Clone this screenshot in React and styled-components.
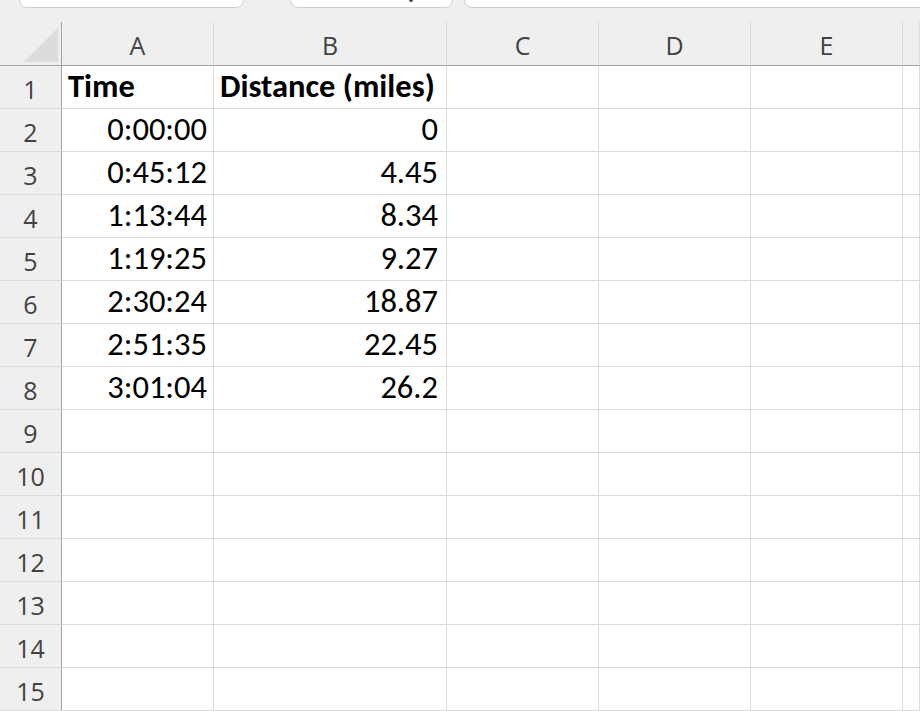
import styled, { createGlobalStyle } from "styled-components";

const GlobalStyle = createGlobalStyle`
  html, body {
    margin: 0;
    padding: 0;
    background: #efefef;
    overflow: hidden;
  }
`;

const COLS = ["A", "B", "C", "D", "E", ""];
const WIDTHS = "62px 152px 233px 152px 152px 152px 1fr";

const rows = [
  ["Time", "Distance (miles)"],
  ["0:00:00", "0"],
  ["0:45:12", "4.45"],
  ["1:13:44", "8.34"],
  ["1:19:25", "9.27"],
  ["2:30:24", "18.87"],
  ["2:51:35", "22.45"],
  ["3:01:04", "26.2"],
];

const Page = styled.div`
  width: 920px;
  height: 711px;
  overflow: hidden;
  background: #efefef;
  display: flex;
  flex-direction: column;
`;

const TabStrip = styled.div`
  height: 22px;
  display: flex;
  align-items: flex-start;
  padding-left: 19px;
  flex-shrink: 0;
`;

const Tab = styled.div`
  box-sizing: border-box;
  height: 15px;
  margin-top: -7px;
  width: ${(p) => p.$w};
  margin-right: ${(p) => p.$gap || "0px"};
  flex-shrink: 0;
  background: #ffffff;
  border: 1px solid #cfcfcf;
  border-radius: 0 0 8px 8px;
  position: relative;
`;

const Descender = styled.span`
  position: absolute;
  left: 118px;
  top: 6px;
  width: 4px;
  height: 2px;
  border-radius: 0 0 3px 3px;
  background: #444;
`;

const Grid = styled.div`
  display: grid;
  grid-template-columns: ${WIDTHS};
  grid-auto-rows: 43px;
  grid-template-rows: 44px;
  background: #ffffff;
  flex: 1;
`;

const ColHead = styled.div`
  background: #efefef;
  border-bottom: 1px solid #a4a4a4;
  border-right: 1px solid #dadada;
  display: flex;
  align-items: center;
  justify-content: center;
  padding-top: 3px;
  box-sizing: border-box;
  font-family: "Open Sans", "Noto Sans", sans-serif;
  font-size: 25px;
  color: #424242;
`;

const Corner = styled.div`
  background: #efefef;
  border-bottom: 1px solid #a4a4a4;
  border-right: 1px solid #a4a4a4;
  position: relative;
  box-sizing: border-box;

  &::after {
    content: "";
    position: absolute;
    right: 3px;
    bottom: 3px;
    width: 34px;
    height: 34px;
    background: #dcdcdc;
    clip-path: polygon(100% 0, 100% 100%, 0 100%);
  }
`;

const RowHead = styled.div`
  background: #efefef;
  border-right: 1px solid #a4a4a4;
  border-bottom: 1px solid #dcdcdc;
  display: flex;
  align-items: center;
  justify-content: center;
  padding-top: 3px;
  box-sizing: border-box;
  font-family: "Open Sans", "Noto Sans", sans-serif;
  font-size: 25px;
  color: #424242;
`;

const Cell = styled.div`
  border-right: 1px solid #dadada;
  border-bottom: 1px solid #dadada;
  box-sizing: border-box;
  display: flex;
  align-items: flex-end;
  justify-content: ${(p) => (p.$right ? "flex-end" : "flex-start")};
  padding: 0 ${(p) => p.$pr || "6px"} 3px 6px;
  font-family: "Carlito", "Lato", sans-serif;
  font-size: 32.5px;
  line-height: 38px;
  font-weight: ${(p) => (p.$bold ? 700 : 400)};
  color: #000;
  white-space: nowrap;
  overflow: visible;
`;

const App = () => {
  const allRows = Array.from({ length: 15 }, (_, i) => rows[i] || ["", ""]);
  return (
    <Page>
      <GlobalStyle />
      <TabStrip>
        <Tab $w="225px" $gap="46px" />
        <Tab $w="163px" $gap="11px">
          <Descender />
        </Tab>
        <Tab $w="480px" />
      </TabStrip>
      <Grid>
        <Corner />
        {COLS.map((c, i) => (
          <ColHead key={i}>{c}</ColHead>
        ))}
        {allRows.map((r, i) => {
          const header = i === 0;
          return [
            <RowHead key={`h${i}`}>{i + 1}</RowHead>,
            <Cell key={`a${i}`} $bold={header} $right={!header}>
              {r[0]}
            </Cell>,
            <Cell key={`b${i}`} $bold={header} $right={!header} $pr="8px">
              {r[1]}
            </Cell>,
            ...[0, 1, 2, 3].map((k) => <Cell key={`e${i}-${k}`} />),
          ];
        })}
      </Grid>
    </Page>
  );
};

export default App;
